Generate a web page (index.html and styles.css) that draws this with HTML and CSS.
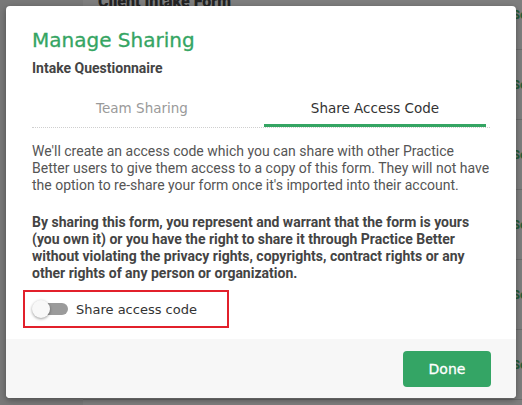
FILE: index.html
```html
<!DOCTYPE html>
<html>
<head>
<meta charset="utf-8">
<link rel="stylesheet" href="styles.css">
</head>
<body>
<div class="page">
  <div class="page-side"></div>
  <div class="page-main">
    <div class="page-title">Client Intake Form</div>
    <div class="page-rows">
      <div class="page-row"><span class="row-link">Se</span></div>
      <div class="page-row"><span class="row-link">Se</span></div>
      <div class="page-row"><span class="row-link">Se</span></div>
      <div class="page-row"><span class="row-link">Se</span></div>
      <div class="page-row"><span class="row-link">Se</span></div>
      <div class="page-row"><span class="row-link">Se</span></div>
    </div>
  </div>
</div>
<div class="overlay">
  <div class="modal">
    <div class="modal-header">
      <h1 class="modal-title">Manage Sharing</h1>
      <div class="modal-subtitle">Intake Questionnaire</div>
    </div>
    <div class="tabs">
      <div class="tab tab-first">Team Sharing</div>
      <div class="tab tab-active">Share Access Code</div>
    </div>
    <div class="modal-body">
      <p class="text">We'll create an access code which you can share with other Practice Better users to give them access to a copy of this form. They will not have the option to re-share your form once it's imported into their account.</p>
      <p class="text text-bold">By sharing this form, you represent and warrant that the form is yours (you own it) or you have the right to share it through Practice Better without violating the privacy rights, copyrights, contract rights or any other rights of any person or organization.</p>
      <div class="toggle-box">
        <span class="toggle"><span class="toggle-knob"></span></span>
        <span class="toggle-label">Share access code</span>
      </div>
    </div>
    <div class="modal-footer">
      <button class="btn-done">Done</button>
    </div>
  </div>
</div>
</body>
</html>
```
FILE: styles.css
```css
* { box-sizing: border-box; }
html, body { margin: 0; padding: 0; }
body {
  width: 522px;
  height: 405px;
  overflow: hidden;
  background: #7c7c7c;
  font-family: Roboto, "Liberation Sans", sans-serif;
  position: relative;
}
.page {
  display: flex;
  height: 405px;
  overflow: hidden;
}
.page-side {
  width: 83px;
  background: #787878;
}
.page-main {
  flex: 1;
  background: #7e7e7e;
  overflow: hidden;
}
.page-title {
  font-family: Roboto, sans-serif;
  font-weight: 900;
  font-size: 16px;
  color: #232323;
  margin-top: -8px;
  padding-left: 15px;
  line-height: 20px;
}
.page-rows {
  margin-top: -32px;
}
.page-row {
  height: 70px;
  border-bottom: 1px solid #6c6c6c;
  padding-left: 429px;
  display: flex;
  flex-direction: column;
  justify-content: center;
}
.row-link {
  font-family: Roboto, sans-serif;
  font-weight: bold;
  font-size: 13px;
  color: #245c39;
}
.overlay {
  position: absolute;
  inset: 0;
  padding: 6px;
}
.modal {
  width: 510px;
  height: 392px;
  background: #fff;
  border-radius: 4px;
  box-shadow: 0 2px 6px rgba(0,0,0,0.35);
  display: flex;
  flex-direction: column;
  overflow: hidden;
}
.modal-header {
  padding: 22px 26px 0 26px;
}
.modal-title {
  margin: 0;
  font-family: "DejaVu Sans", sans-serif;
  font-weight: normal;
  font-size: 20px;
  line-height: 24px;
  color: #35a563;
  -webkit-text-stroke: 0.3px #35a563;
}
.modal-subtitle {
  margin-top: 8px;
  font-weight: bold;
  font-size: 14px;
  line-height: 16px;
  color: #444;
}
.tabs {
  display: flex;
  margin: 15px 26px 0 26px;
  border-bottom: 1px dotted #cfcfcf;
}
.tab {
  text-align: center;
  font-family: "DejaVu Sans", sans-serif;
  font-size: 13.5px;
  color: #9a9a9a;
  height: 36px;
  line-height: 34px;
}
.tab-first {
  width: 232px;
  padding-right: 12px;
}
.tab-active {
  width: 222px;
  color: #333;
  border-bottom: 3px solid #35a563;
}
.modal-body {
  flex: 1;
  padding: 15px 26px 0 26px;
}
.text {
  margin: 0 0 20px 0;
  font-size: 14px;
  line-height: 17px;
  color: #555;
}
.text-bold {
  font-weight: bold;
  color: #444;
  margin-bottom: 8px;
}
.toggle-box {
  display: inline-flex;
  align-items: center;
  border: 2px solid #e2202b;
  margin-left: -9px;
  width: 206px;
  height: 38px;
  padding-left: 8px;
}
.toggle {
  position: relative;
  width: 33px;
  height: 12px;
  border-radius: 6px;
  background: #9b9b9b;
  margin-left: 2px;
}
.toggle-knob {
  position: absolute;
  left: -3px;
  top: -3px;
  width: 18px;
  height: 18px;
  border-radius: 50%;
  background: #f8f8f8;
  box-shadow: 0 1px 3px rgba(0,0,0,0.4);
}
.toggle-label {
  margin-left: 8px;
  font-family: "DejaVu Sans", sans-serif;
  font-size: 13px;
  color: #333;
}
.modal-footer {
  height: 59px;
  background: #f7f7f7;
  display: flex;
  justify-content: flex-end;
  align-items: center;
  padding-right: 25px;
}
.btn-done {
  width: 88px;
  height: 36px;
  border: none;
  border-radius: 4px;
  background: #34a565;
  color: #fff;
  font-family: "DejaVu Sans", sans-serif;
  font-size: 14px;
  -webkit-text-stroke: 0.3px #fff;
  cursor: pointer;
}
```
